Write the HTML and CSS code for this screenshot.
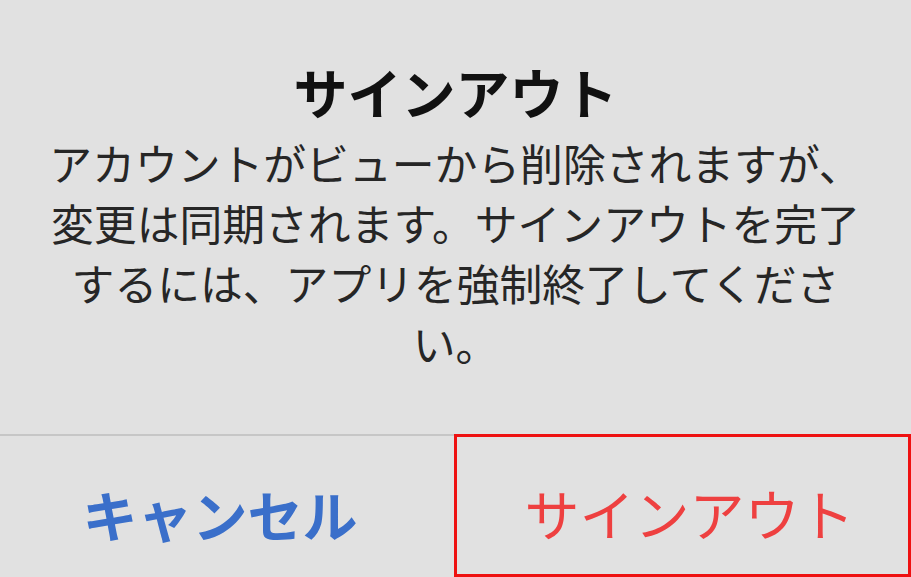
FILE: index.html
```html
<!DOCTYPE html>
<html lang="ja">
<head>
<meta charset="utf-8">
<link rel="stylesheet" href="styles.css">
</head>
<body>
<div class="alert">
  <div class="content">
    <div class="title">サインアウト</div>
    <div class="message">アカウントがビューから削除されますが、<br>変更は同期されます。サインアウトを完了<br>するには、アプリを強制終了してくださ<br>い。</div>
  </div>
  <div class="actions">
    <div class="btn cancel">キャンセル</div>
    <div class="btn signout">サインアウト</div>
  </div>
</div>
</body>
</html>
```
FILE: styles.css
```css
html, body {
  margin: 0;
  padding: 0;
}
body {
  background: #e1e1e1;
  font-family: "Noto Sans CJK JP", "Noto Sans", sans-serif;
  width: 911px;
  height: 577px;
  overflow: hidden;
}
.alert {
  display: flex;
  flex-direction: column;
  height: 577px;
}
.content {
  height: 434px;
  box-sizing: border-box;
  padding-top: 62px;
  text-align: center;
  color: #1a1a1a;
}
.title {
  font-size: 54px;
  font-weight: 700;
  line-height: 60px;
  color: #111;
}
.message {
  margin-top: 10px;
  font-size: 42.8px;
  line-height: 60px;
  color: #262626;
  white-space: nowrap;
}
.actions {
  display: flex;
  flex: 1;
}
.btn {
  display: flex;
  align-items: center;
  justify-content: center;
  font-size: 55px;
  box-sizing: border-box;
  padding-top: 12px;
}
.cancel {
  width: 454px;
  border-top: 2px solid #c6c6c6;
  color: #3a6fca;
  font-weight: 700;
  padding-right: 14px;
}
.signout {
  flex: 1;
  border: 3px solid #ee1111;
  color: #ee4040;
  font-weight: 400;
  padding-left: 14px;
}
```
